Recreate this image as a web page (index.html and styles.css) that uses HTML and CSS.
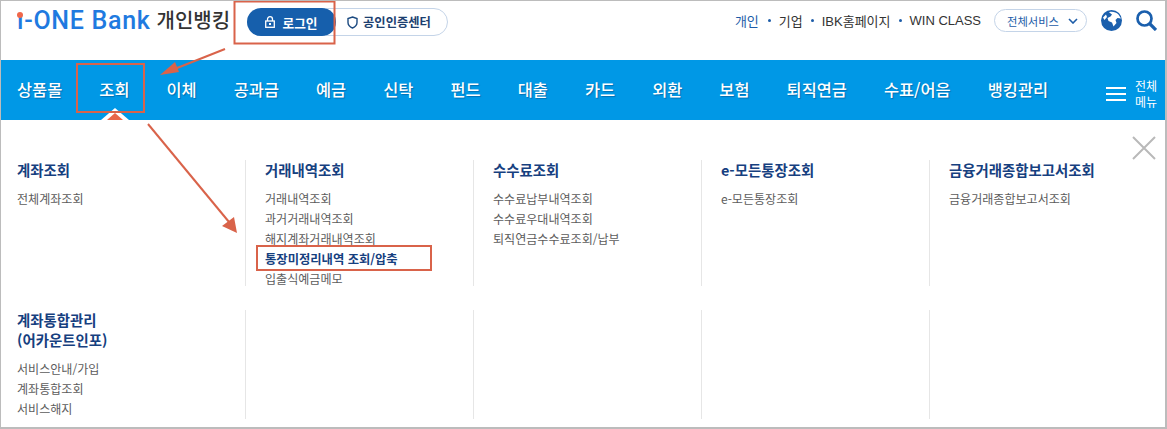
FILE: index.html
```html
<!DOCTYPE html>
<html lang="ko">
  <head>
    <meta charset="UTF-8" />
    <title>i-ONE Bank 개인뱅킹</title>
    <link rel="stylesheet" href="styles.css">
  </head>
  <body>
    <div class="frame">
      <div class="header">
        <div class="logo"><span class="logo-i">ı</span>-ONE Bank</div>
        <div class="logo-sub">개인뱅킹</div>
        <div class="auth">
          <a class="btn-login">
            <svg width="10" height="12" viewBox="0 0 10 12"><path d="M2.5 5V3.2a2.5 2.5 0 0 1 5 0V5" fill="none" stroke="#fff" stroke-width="1.3"/><rect x="0.7" y="5" width="8.6" height="6.3" fill="none" stroke="#fff" stroke-width="1.3"/><rect x="4" y="7" width="2" height="2" fill="#fff"/></svg>
            로그인
          </a>
          <a class="btn-cert">
            <svg width="11" height="13" viewBox="0 0 11 13"><path d="M5.5 1 L10 2.5 V6.5 C10 9.3 8 11 5.5 12 C3 11 1 9.3 1 6.5 V2.5 Z" fill="none" stroke="#1c4a80" stroke-width="1.4"/></svg>
            공인인증센터
          </a>
        </div>
        <div class="util">
          <a class="util-link active">개인</a>
          <i class="dot"></i>
          <a class="util-link">기업</a>
          <i class="dot"></i>
          <a class="util-link">IBK홈페이지</a>
          <i class="dot"></i>
          <a class="util-link">WIN CLASS</a>
          <a class="pill">전체서비스
            <svg width="10" height="6" viewBox="0 0 10 6"><path d="M1 1 L5 5 L9 1" fill="none" stroke="#1c5ca8" stroke-width="1.6"/></svg>
          </a>
          <svg class="globe" width="21" height="21" viewBox="0 0 21 21"><circle cx="10.5" cy="10.5" r="10.5" fill="#1a5fad"/><path d="M8 2.2 C11 1.2 15 2 17.5 4.5 L20 8.5 L16.5 8 L14.5 10 L15.5 13 L12.5 16.5 L11 12.5 L7.5 11 L6.5 8 L9.5 6.5 L11 4.5 Z" fill="#fff"/><path d="M2 7.5 L5 4.5 L6 7 L3.5 10 Z" fill="#fff"/></svg>
          <svg class="search" width="21" height="21" viewBox="0 0 21 21"><circle cx="8.5" cy="8.5" r="7" fill="none" stroke="#1a5fad" stroke-width="2.7"/><path d="M13.5 13.5 L20 20" stroke="#1a5fad" stroke-width="3.2"/></svg>
        </div>
      </div>

      <div class="nav">
        <a>상품몰</a>
        <a>조회</a>
        <a>이체</a>
        <a>공과금</a>
        <a>예금</a>
        <a>신탁</a>
        <a>펀드</a>
        <a>대출</a>
        <a>카드</a>
        <a>외환</a>
        <a>보험</a>
        <a>퇴직연금</a>
        <a>수표/어음</a>
        <a>뱅킹관리</a>
        <div class="all-menu">
          <span class="burger"><i></i><i></i><i></i></span>
          <span class="all-text">전체<br>메뉴</span>
        </div>
      </div>

      <div class="menu">
        <div class="menu-row">
          <div class="col">
            <h3>계좌조회</h3>
            <a>전체계좌조회</a>
          </div>
          <div class="col">
            <h3>거래내역조회</h3>
            <a>거래내역조회</a>
            <a>과거거래내역조회</a>
            <a>해지계좌거래내역조회</a>
            <a class="current">통장미정리내역 조회/압축</a>
            <a>입출식예금메모</a>
          </div>
          <div class="col">
            <h3>수수료조회</h3>
            <a>수수료납부내역조회</a>
            <a>수수료우대내역조회</a>
            <a>퇴직연금수수료조회/납부</a>
          </div>
          <div class="col">
            <h3>e-모든통장조회</h3>
            <a>e-모든통장조회</a>
          </div>
          <div class="col">
            <h3>금융거래종합보고서조회</h3>
            <a>금융거래종합보고서조회</a>
          </div>
        </div>
        <div class="menu-row">
          <div class="col">
            <h3>계좌통합관리<br>(어카운트인포)</h3>
            <a>서비스안내/가입</a>
            <a>계좌통합조회</a>
            <a>서비스해지</a>
          </div>
          <div class="col"></div>
          <div class="col"></div>
          <div class="col"></div>
          <div class="col"></div>
        </div>
        <svg class="close" width="24" height="24" viewBox="0 0 24 24"><path d="M1 1 L23 23 M23 1 L1 23" stroke="#b9b9b9" stroke-width="2"/></svg>
      </div>

      <!-- caret and the red marks drawn over the page -->
      <svg class="marks" width="1167" height="429" viewBox="0 0 1167 429">
        <path d="M115 108 L129 120 L101 120 Z" fill="#fff"/>
        <path d="M115 113 L123 120 L107 120 Z" fill="#e8674a"/>
        <g fill="none" stroke="#d9634a" stroke-width="2">
          <rect x="234.5" y="1.5" width="100" height="42"/>
          <rect x="77" y="64" width="67" height="48"/>
          <rect x="257" y="246" width="174" height="24"/>
          <path d="M225 49 L172 70"/>
          <path d="M148 124 L229 222"/>
        </g>
        <path d="M160 75 L175 62 L179 72 Z" fill="#d9634a"/>
        <path d="M237 233 L222 226 L234 217 Z" fill="#d9634a"/>
      </svg>
    </div>
  </body>
</html>
```

FILE: styles.css
```css
* {
  box-sizing: border-box;
}
body {
  margin: 0;
  font-family: "Noto Sans CJK KR", "Noto Sans", sans-serif;
  background-color: #fff;
}
h3 {
  margin: 0;
}
.frame {
  position: relative;
  width: 1167px;
  height: 429px;
  overflow: hidden;
  border: 1px solid #bcbcbc;
  border-width: 1px 2px 2px 1px;
}
.header {
  display: flex;
  align-items: flex-start;
  height: 59px;
  padding-left: 16px;
}
.logo {
  margin-top: 3px;
  font-family: Roboto, "Liberation Sans", sans-serif;
  font-size: 25px;
  font-weight: 500;
  line-height: 34px;
  letter-spacing: 0.7px;
  color: #1f7ae0;
  white-space: nowrap;
}
.logo-i {
  position: relative;
}
.logo-i::before {
  content: "";
  position: absolute;
  top: 6px;
  left: 0;
  width: 6px;
  height: 6px;
  border-radius: 50%;
  background-color: #f0674a;
}
.logo-sub {
  margin: 2px 0 0 6px;
  font-size: 20px;
  font-weight: 500;
  line-height: 34px;
  color: #333;
}
.auth {
  position: absolute;
  top: 7px;
  left: 246px;
  display: flex;
}
.btn-login {
  position: relative;
  display: flex;
  align-items: center;
  justify-content: center;
  gap: 7px;
  width: 89px;
  height: 28px;
  border-radius: 14px;
  background-color: #165fac;
  color: #fff;
  font-size: 12.7px;
  font-weight: 700;
}
.btn-cert {
  display: flex;
  align-items: center;
  gap: 5px;
  width: 122px;
  height: 28px;
  margin-left: -10px;
  padding-left: 20px;
  border: 1px solid #c4d4e8;
  border-radius: 0 14px 14px 0;
  color: #1c3f70;
  font-size: 12.3px;
  font-weight: 700;
}
.util {
  display: flex;
  align-items: center;
  height: 23px;
  margin: 8px 0 0 auto;
  padding-right: 8px;
  font-family: "Liberation Sans", "Noto Sans CJK KR", sans-serif;
  font-size: 13px;
  color: #333;
}
.util-link.active {
  margin-right: 1px;
  color: #1c5ca8;
}
.dot {
  width: 3px;
  height: 3px;
  margin: 0 8px;
  border-radius: 50%;
  background-color: #1c5ca8;
}
.pill {
  display: flex;
  align-items: center;
  gap: 9px;
  height: 23px;
  margin-left: 13px;
  padding: 0 8px 0 12px;
  border: 1px solid #c4d4e8;
  border-radius: 12px;
  color: #1c5ca8;
  font-size: 11.3px;
}
.globe {
  margin-left: 14px;
}
.search {
  margin-left: 14px;
}
.nav {
  display: flex;
  align-items: center;
  gap: 37.05px;
  height: 60px;
  padding: 0 0 2px 16px;
  background-color: #0098e6;
  color: #fff;
  font-size: 16.4px;
  font-weight: 500;
  text-shadow: 1px 1px 1px rgba(0, 40, 90, 0.35);
}
.all-menu {
  display: flex;
  align-items: center;
  gap: 9px;
  margin-left: auto;
  padding: 10px 8px 0 0;
  font-weight: 400;
  text-shadow: none;
}
.burger {
  display: flex;
  flex-direction: column;
  gap: 4px;
}
.burger i {
  display: block;
  width: 20px;
  height: 2px;
  background-color: #fff;
}
.all-text {
  font-size: 12px;
  line-height: 16px;
  text-align: center;
}
.menu {
  position: relative;
  display: flex;
  flex-direction: column;
  gap: 24px;
  padding-top: 40px;
}
.menu-row {
  display: grid;
  grid-template-columns: 244px repeat(4, 228px);
}
.col {
  padding-left: 19px;
  border-left: 1px solid #e6e6e6;
}
.col:first-child {
  padding-left: 16px;
  border-left: none;
}
.menu-row:first-child .col {
  height: 126px;
}
.menu-row:last-child .col {
  height: 103px;
}
.col h3 {
  margin-bottom: 9px;
  font-size: 14.4px;
  font-weight: 700;
  line-height: 20px;
  color: #16407f;
}
.menu-row:last-child h3 {
  margin-bottom: 8px;
  line-height: 17px;
}
.col a {
  display: block;
  font-size: 12.05px;
  line-height: 20px;
  color: #5c5c5c;
  white-space: nowrap;
}
.col a.current {
  font-size: 12.3px;
  font-weight: 700;
  color: #16407f;
}
.close {
  position: absolute;
  top: 16px;
  right: 9px;
}
.marks {
  position: absolute;
  top: -1px;
  left: -1px;
  pointer-events: none;
}
```
